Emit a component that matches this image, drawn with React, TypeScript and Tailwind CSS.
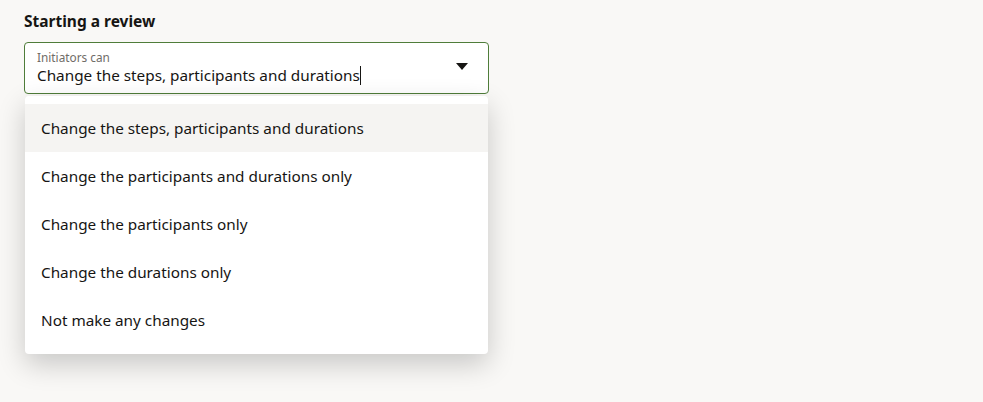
import React from "react";

const options = [
  "Change the steps, participants and durations",
  "Change the participants and durations only",
  "Change the participants only",
  "Change the durations only",
  "Not make any changes",
];

export default function App() {
  return (
    <div
      className="w-[983px] h-[402px] bg-[#f9f8f6] text-[#161513] overflow-hidden"
      style={{ fontFamily: '"Noto Sans", "Open Sans", sans-serif' }}
    >
      <div className="pl-[24px] pt-[10px] w-[489px]">
        <h2 className="text-[15.5px] font-bold leading-[22px] text-[#161513]">Starting a review</h2>
        <div className="mt-[10px] h-[52px] w-[465px] rounded-[4px] border border-[#4f7d3a] bg-white flex items-center pl-[12px] pr-[20px]">
          <div className="flex-1 flex flex-col">
            <span className="text-[11.8px] leading-[14px] text-[#6f6c67]">Initiators can</span>
            <span className="text-[15.3px] leading-[22px] text-[#161513] flex items-center">
              Change the steps, participants and durations
              <span className="inline-block w-[1px] h-[19px] bg-[#161513]" />
            </span>
          </div>
          <svg width="12" height="7" viewBox="0 0 12 7" className="mb-[4px]">
            <path d="M0 0 H12 L6 7 Z" fill="#161513" />
          </svg>
        </div>
        <div className="mt-[2px] ml-[1px] w-[463px] bg-white rounded-[4px] pt-[8px] pb-[10px] shadow-[0_10px_28px_rgba(0,0,0,0.2)]">
          {options.map((o, i) => (
            <div
              key={o}
              className={`h-[48px] flex items-center pl-[16px] text-[15.3px] ${i === 0 ? "bg-[#f5f4f2]" : ""}`}
            >
              {o}
            </div>
          ))}
        </div>
      </div>
    </div>
  );
}
